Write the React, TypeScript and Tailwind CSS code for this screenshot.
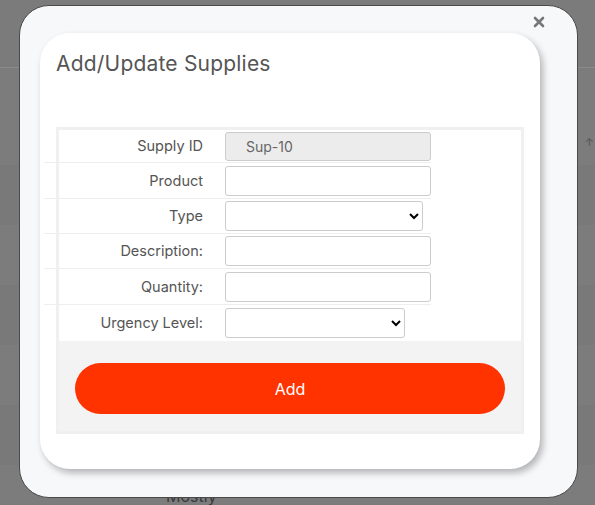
import React from "react";

const rows = [
  { label: "Supply ID", kind: "id", h: "h-[33px]" },
  { label: "Product", kind: "text", h: "h-[36px]" },
  { label: "Type", kind: "select", w: "w-[198px]", h: "h-[35px]" },
  { label: "Description:", kind: "text", h: "h-[35px]" },
  { label: "Quantity:", kind: "text", h: "h-[36px]" },
  { label: "Urgency Level:", kind: "select", w: "w-[180px]", h: "h-[36px]" },
];

export default function App() {
  return (
    <div
      className="relative w-[595px] h-[505px] overflow-hidden bg-[#7b7b7b]"
      style={{ fontFamily: "Inter, 'Open Sans', sans-serif" }}
    >
      {/* --- page behind the overlay --- */}
      <div className="flex flex-col">
        <div className="h-[68px] border-b border-[#8a8a8a]"></div>
        <div className="h-[97px] bg-[#7c7c7c] flex justify-end items-start pt-[66px]">
          <span className="text-[11px] text-[#555] mr-[1px]">↑</span>
        </div>
        <div className="h-[60px] bg-[#797979]"></div>
        <div className="h-[60px] bg-[#7c7c7c]"></div>
        <div className="h-[60px] bg-[#797979]"></div>
        <div className="h-[60px] bg-[#7c7c7c]"></div>
        <div className="h-[60px] bg-[#797979]"></div>
        <div className="h-[60px] bg-[#7c7c7c] pl-[166px] pt-[19px]">
          <span className="text-[16px] leading-[24px] text-[#3a3a3a]">Mostly</span>
        </div>
      </div>

      {/* --- modal --- */}
      <div className="absolute left-[19px] top-[5px] w-[559px] h-[493px] bg-[#f7f8fa] rounded-[30px] border border-[#4a4a4a] pt-[27px] pl-[20px]">
        <button className="absolute right-[32px] top-[10px] text-[#777]">
          <svg width="12" height="12" viewBox="0 0 12 12">
            <path d="M2 2 L10 10 M10 2 L2 10" stroke="#777" strokeWidth="2.6" strokeLinecap="round" />
          </svg>
        </button>

        <div className="w-[500px] h-[436px] bg-white rounded-[30px] shadow-[3px_4px_7px_rgba(0,0,0,0.28)] px-[16px] pt-[18px]">
          <h2 className="text-[21px] leading-[26px] text-[#555] tracking-[0.2px]">Add/Update Supplies</h2>

          <div className="mt-[50px] w-[468px] border-[3px] border-[#f0f0f0] bg-white">
            <div className="-ml-[15px] w-[387px]">
              {rows.map((r, i) => (
                <div
                  key={r.label}
                  className={`flex items-center ${r.h} ${i === rows.length - 1 ? "" : "border-b border-[#eeeeee]"}`}
                >
                  <label className="w-[162px] pr-[3px] text-right text-[14.5px] text-[#555]">{r.label}</label>
                  <div className="ml-[19px]">
                    {r.kind === "id" && (
                      <input
                        disabled
                        value="Sup-10"
                        className="w-[206px] h-[29px] bg-[#ececec] border border-[#cccccc] rounded-[3px] pl-[20px] text-[14px] text-[#666]"
                      />
                    )}
                    {r.kind === "text" && (
                      <input className="w-[206px] h-[30px] bg-white border border-[#cccccc] rounded-[3px] px-2 text-[14px]" />
                    )}
                    {r.kind === "select" && (
                      <select className={`${r.w} h-[30px] bg-white border border-[#cccccc] rounded-[3px] text-[14px]`}>
                        <option></option>
                      </select>
                    )}
                  </div>
                </div>
              ))}
            </div>

            <div className="bg-[#f3f3f3] px-[16px] pt-[22px] pb-[17px]">
              <button className="w-full h-[51px] rounded-full bg-[#ff3300] text-white text-[16px]">Add</button>
            </div>
          </div>
        </div>
      </div>
    </div>
  );
}
